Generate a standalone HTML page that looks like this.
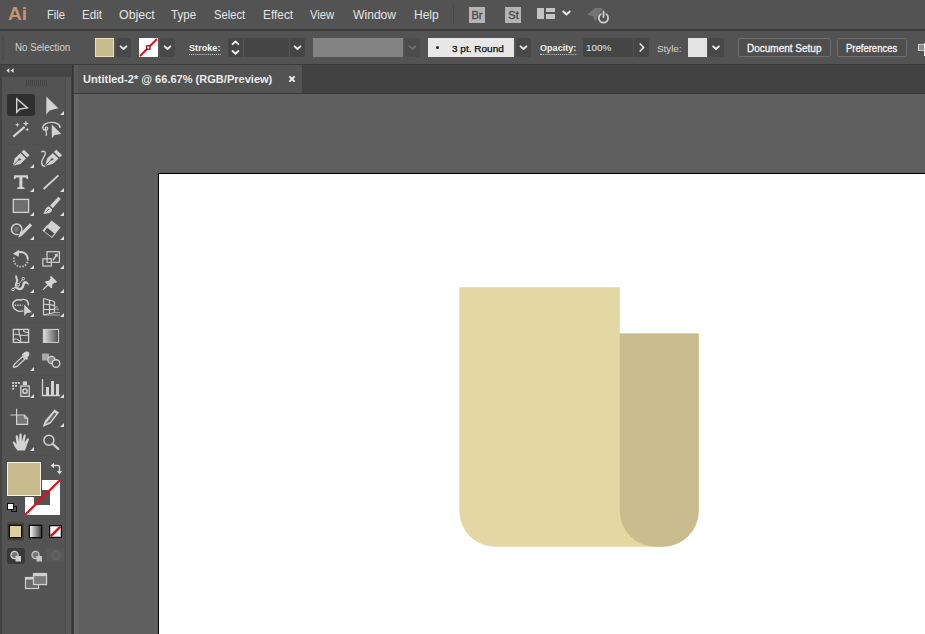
<!DOCTYPE html><html><head><meta charset="utf-8"><title>Adobe Illustrator</title><style>
*{box-sizing:border-box;margin:0;padding:0}
html,body{width:925px;height:634px;overflow:hidden;background:#5f5f5f}
body{position:relative;font-family:"Liberation Sans",sans-serif;color:#dcdcdc;font-size:12px}
.a{position:absolute}
.t{position:absolute;white-space:nowrap;transform-origin:0 50%;line-height:14px}
#menubar{left:0;top:0;width:925px;height:29px;background:#535353}
#div1{left:0;top:29px;width:925px;height:2px;background:#3c3c3c}
#ctrl{left:0;top:31px;width:925px;height:33px;background:#535353}
#tabbar{left:74px;top:64px;width:851px;height:30px;background:#424242;border-top:1px solid #3a3a3a;border-bottom:1px solid #3a3a3a}
#tab{left:75px;top:65px;width:227px;height:28px;background:#535353}
#tools{left:0;top:64px;width:74px;height:570px;background:#535353}
#canvas{left:74px;top:94px;width:851px;height:540px;background:#5f5f5f;overflow:hidden}
.dd{position:absolute;background:#484848;border-radius:2px}
.fld{position:absolute;background:#454545;border-radius:2px}
.btn{position:absolute;border:1px solid #6e6e6e;border-radius:2px;background:#4e4e4e}
</style></head><body>
<div class="a" id="menubar"></div><div class="a" id="div1"></div><div class="a" id="ctrl"></div>
<span class="t" style="left:8px;top:4px;font-size:18px;color:#c9936c;font-weight:bold;transform:scaleX(1.06);line-height:20px;">Ai</span>
<span class="t" style="left:47.3px;top:8px;font-size:12.5px;color:#e4e4e4;font-weight:normal;transform:scaleX(0.9);">File</span>
<span class="t" style="left:82px;top:8px;font-size:12.5px;color:#e4e4e4;font-weight:normal;transform:scaleX(0.93);">Edit</span>
<span class="t" style="left:119px;top:8px;font-size:12.5px;color:#e4e4e4;font-weight:normal;transform:scaleX(0.99);">Object</span>
<span class="t" style="left:171px;top:8px;font-size:12.5px;color:#e4e4e4;font-weight:normal;transform:scaleX(0.93);">Type</span>
<span class="t" style="left:214px;top:8px;font-size:12.5px;color:#e4e4e4;font-weight:normal;transform:scaleX(0.895);">Select</span>
<span class="t" style="left:263px;top:8px;font-size:12.5px;color:#e4e4e4;font-weight:normal;transform:scaleX(0.95);">Effect</span>
<span class="t" style="left:310.3px;top:8px;font-size:12.5px;color:#e4e4e4;font-weight:normal;transform:scaleX(0.9);">View</span>
<span class="t" style="left:353px;top:8px;font-size:12.5px;color:#e4e4e4;font-weight:normal;transform:scaleX(0.97);">Window</span>
<span class="t" style="left:414.3px;top:8px;font-size:12.5px;color:#e4e4e4;font-weight:normal;transform:scaleX(0.96);">Help</span>
<div class="a" style="left:453px;top:5px;width:1px;height:19px;background:#474747"></div>
<div class="a" style="left:469px;top:7px;width:16px;height:16px;background:#b4b4b4"></div>
<span class="t" style="left:471.5px;top:8px;font-size:11px;color:#4a4a4a;font-weight:normal;transform:scaleX(1.0);-webkit-text-stroke:0.35px #4a4a4a;">Br</span>
<div class="a" style="left:505px;top:7px;width:16px;height:16px;background:#b4b4b4"></div>
<span class="t" style="left:508.3px;top:8px;font-size:11px;color:#4a4a4a;font-weight:normal;transform:scaleX(1.0);-webkit-text-stroke:0.35px #4a4a4a;">St</span>
<div class="a" style="left:537px;top:7.5px;width:7.3px;height:11.3px;background:#c4c4c4"></div>
<div class="a" style="left:546px;top:7.5px;width:8.5px;height:4.5px;background:#c4c4c4"></div>
<div class="a" style="left:546px;top:14px;width:8.5px;height:4.8px;background:#c4c4c4"></div>
<svg class="a" style="left:558px;top:6px" width="16" height="12"><path d="M5.3 5.5 L8.5 8.5 L11.7 5.5" fill="none" stroke="#ececec" stroke-width="1.9" stroke-linecap="round" stroke-linejoin="round"/></svg>
<svg class="a" style="left:585px;top:4px" width="28" height="22" viewBox="0 0 28 22">
<path d="M2 11 L10 4 L18 4 L14 10 L10 18 L8 12 Z" fill="#757575"/>
<circle cx="18.5" cy="14" r="4.6" fill="none" stroke="#d0d0d0" stroke-width="1.8"/>
<rect x="16.5" y="7" width="4" height="5" fill="#535353"/>
<path d="M18.5 7.5 V13" stroke="#d0d0d0" stroke-width="1.8" stroke-linecap="round"/>
</svg>
<div class="a" style="left:2px;top:35px;width:2px;height:25px;background:repeating-linear-gradient(#474747 0 1px,#535353 1px 2px)"></div>
<span class="t" style="left:15px;top:40.5px;font-size:10px;color:#d2d2d2;font-weight:normal;transform:scaleX(0.975);">No Selection</span>
<div class="a" style="left:95px;top:38px;width:19px;height:19px;background:#c8bc8e;border:1px solid #e6dfc0"></div>
<div class="dd" style="left:116px;top:38px;width:15px;height:19px"></div><svg class="a" style="left:116px;top:38px" width="15" height="19"><path d="M4.6 8.35 L7.5 11.049999999999999 L10.4 8.35" fill="none" stroke="#ececec" stroke-width="1.9" stroke-linecap="round" stroke-linejoin="round"/></svg>
<svg class="a" style="left:139px;top:38px" width="19" height="19" viewBox="0 0 19 19"><rect x="0" y="0" width="19" height="19" fill="#fff"/><path d="M1 18 L18 1" stroke="#e0101c" stroke-width="2"/><rect x="7.6" y="7.8" width="3.4" height="3.4" fill="#fff" stroke="#a00c18" stroke-width="1.3"/></svg>
<div class="dd" style="left:160px;top:38px;width:15px;height:19px"></div><svg class="a" style="left:160px;top:38px" width="15" height="19"><path d="M4.6 8.35 L7.5 11.049999999999999 L10.4 8.35" fill="none" stroke="#ececec" stroke-width="1.9" stroke-linecap="round" stroke-linejoin="round"/></svg>
<span class="t" style="left:189px;top:42px;font-size:9.5px;color:#f0f0f0;font-weight:bold;transform:scaleX(0.962);border-bottom:1px dotted #cfcfcf;line-height:12px;">Stroke:</span>
<div class="fld" style="left:228px;top:38px;width:77px;height:19px"></div>
<div class="a" style="left:243px;top:38px;width:1px;height:19px;background:#535353"></div><div class="a" style="left:289px;top:38px;width:1px;height:19px;background:#535353"></div>
<svg class="a" style="left:228px;top:38px" width="15" height="19"><path d="M4.6 6.15 L7.5 3.4499999999999997 L10.4 6.15" fill="none" stroke="#ececec" stroke-width="1.9" stroke-linecap="round" stroke-linejoin="round"/><path d="M4.6 13.05 L7.5 15.75 L10.4 13.05" fill="none" stroke="#ececec" stroke-width="1.9" stroke-linecap="round" stroke-linejoin="round"/></svg>
<svg class="a" style="left:290px;top:38px" width="15" height="19"><path d="M4.6 8.35 L7.5 11.049999999999999 L10.4 8.35" fill="none" stroke="#ececec" stroke-width="1.9" stroke-linecap="round" stroke-linejoin="round"/></svg>
<div class="a" style="left:313px;top:38px;width:90px;height:19px;background:#838383"></div>
<div class="dd" style="left:405px;top:38px;width:15px;height:19px;background:#4c4c4c"></div><svg class="a" style="left:405px;top:38px" width="15" height="19"><path d="M4.6 8.35 L7.5 11.049999999999999 L10.4 8.35" fill="none" stroke="#6e6e6e" stroke-width="1.9" stroke-linecap="round" stroke-linejoin="round"/></svg>
<div class="a" style="left:428px;top:38px;width:86px;height:19px;background:#e7e7e7"></div>
<div class="a" style="left:436px;top:46px;width:3px;height:3px;border-radius:50%;background:#222"></div>
<span class="t" style="left:452px;top:41.8px;font-size:9.5px;color:#0c0c0c;font-weight:normal;transform:scaleX(1.055);-webkit-text-stroke:0.25px #0c0c0c;">3 pt. Round</span>
<div class="dd" style="left:516px;top:38px;width:15px;height:19px"></div><svg class="a" style="left:516px;top:38px" width="15" height="19"><path d="M4.6 8.35 L7.5 11.049999999999999 L10.4 8.35" fill="none" stroke="#ececec" stroke-width="1.9" stroke-linecap="round" stroke-linejoin="round"/></svg>
<span class="t" style="left:540px;top:42px;font-size:9.5px;color:#f0f0f0;font-weight:bold;transform:scaleX(0.955);border-bottom:1px dotted #cfcfcf;line-height:12px;">Opacity:</span>
<div class="fld" style="left:583px;top:38px;width:66px;height:19px"></div><div class="a" style="left:633px;top:38px;width:1px;height:19px;background:#535353"></div>
<span class="t" style="left:586px;top:41.2px;font-size:9.3px;color:#e8e8e8;font-weight:normal;transform:scaleX(1.07);">100%</span>
<svg class="a" style="left:634px;top:38px" width="15" height="19"><path d="M6.2 6 L9.6 9.5 L6.2 13" fill="none" stroke="#ececec" stroke-width="1.7" stroke-linecap="round" stroke-linejoin="round"/></svg>
<span class="t" style="left:657px;top:42px;font-size:9.5px;color:#d4d4d4;font-weight:normal;transform:scaleX(1.03);">Style:</span>
<div class="a" style="left:688px;top:38px;width:19px;height:19px;background:#e4e4e4"></div>
<div class="dd" style="left:708px;top:38px;width:16px;height:19px"></div><svg class="a" style="left:708px;top:38px" width="16" height="19"><path d="M5.1 8.35 L8 11.049999999999999 L10.9 8.35" fill="none" stroke="#ececec" stroke-width="1.9" stroke-linecap="round" stroke-linejoin="round"/></svg>
<div class="btn" style="left:738px;top:38px;width:93px;height:19px"></div>
<span class="t" style="left:747px;top:42.3px;font-size:10px;color:#f4f4f4;font-weight:normal;transform:scaleX(1.0);-webkit-text-stroke:0.3px #f4f4f4;">Document Setup</span>
<div class="btn" style="left:836.5px;top:38px;width:70px;height:19px"></div>
<span class="t" style="left:845.6px;top:42.3px;font-size:10px;color:#f4f4f4;font-weight:normal;transform:scaleX(0.95);-webkit-text-stroke:0.3px #f4f4f4;">Preferences</span>
<div class="a" style="left:917.5px;top:44px;width:7px;height:6.5px;background:#8c8c8c;border-left:1.5px solid #dcdcdc;border-top:1px solid #c4c4c4;border-bottom:1px solid #c4c4c4"></div><div class="a" style="left:923.8px;top:43px;width:1.2px;height:12.5px;background:#ececec"></div>
<div class="a" id="tabbar"></div><div class="a" id="tab"></div>
<span class="t" style="left:83px;top:72.4px;font-size:11.5px;color:#ececec;font-weight:bold;transform:scaleX(0.96);">Untitled-2* @ 66.67% (RGB/Preview)</span>
<svg class="a" style="left:288px;top:75px" width="8" height="8"><path d="M1.4 1.4 L6.6 6.6 M6.6 1.4 L1.4 6.6" stroke="#f0f0f0" stroke-width="1.9"/></svg>
<div class="a" id="tools"></div>
<div class="a" style="left:0;top:64px;width:2px;height:570px;background:#444"></div>
<div class="a" style="left:66px;top:64px;width:6px;height:570px;background:#585858"></div><div class="a" style="left:65px;top:77px;width:1px;height:557px;background:#4a4a4a"></div>
<div class="a" style="left:70.7px;top:64px;width:3.3px;height:570px;background:linear-gradient(90deg,#474747,#343434 55%,#444)"></div>
<div class="a" style="left:2px;top:64px;width:70px;height:13px;background:#464646"></div>
<div class="a" style="left:0px;top:64px;width:74px;height:1px;background:#3c3c3c"></div>
<svg class="a" style="left:5px;top:66px" width="12" height="9"><path d="M4.3 2.2 L1.3 4.6 L4.3 7 Z M8.6 2.2 L5.6 4.6 L8.6 7 Z" fill="#dcdcdc"/></svg>
<div class="a" style="left:26px;top:80px;width:21px;height:6px;background:repeating-linear-gradient(90deg,#434343 0 1px,#535353 1px 2px)"></div>
<div class="a" style="left:7px;top:94px;width:28px;height:22px;background:#2f2f2f;border-radius:3px"></div>
<div class="a" style="left:8px;top:144px;width:56px;height:1px;background:#505050"></div>
<div class="a" style="left:8px;top:244.5px;width:56px;height:1px;background:#505050"></div>
<div class="a" style="left:8px;top:321.5px;width:56px;height:1px;background:#505050"></div>
<div class="a" style="left:8px;top:374.5px;width:56px;height:1px;background:#505050"></div>
<div class="a" style="left:8px;top:402.5px;width:56px;height:1px;background:#505050"></div>
<div class="a" style="left:8px;top:455px;width:56px;height:1px;background:#505050"></div>
<svg class="a" style="left:9.0px;top:93.0px" width="24" height="24" viewBox="0 0 24 24"><path d="M7.7 5.8 L7.7 19.3 L11 16 L18.4 14.9 Z" fill="none" stroke="#d2d2d2" stroke-width="1.4" stroke-linejoin="miter"/></svg>
<svg class="a" style="left:39.0px;top:93.0px" width="24" height="24" viewBox="0 0 24 24"><path d="M7.3 3.5 L7.3 21.6 L10.6 17.5 L19.3 15.2 Z" fill="#d2d2d2"/></svg>
<svg class="a" style="left:60.3px;top:111px" width="4" height="4"><path d="M4 0 V4 H0 Z" fill="#dedede"/></svg>
<svg class="a" style="left:9.0px;top:118.0px" width="24" height="24" viewBox="0 0 24 24"><path d="M4.3 18.6 L15.6 8.9" stroke="#d2d2d2" stroke-width="2.1" stroke-linecap="butt"/><path d="M16.9 2.6 l.9 2.1 2.1 .9 -2.1 .9 -.9 2.1 -.9 -2.1 -2.1 -.9 2.1 -.9z" fill="#d2d2d2"/><path d="M8.3 4.6 l.65 1.5 1.5 .65 -1.5 .65 -.65 1.5 -.65 -1.5 -1.5 -.65 1.5 -.65z" fill="#d2d2d2"/><path d="M18.2 9.8 l.55 1.3 1.3 .55 -1.3 .55 -.55 1.3 -.55 -1.3 -1.3 -.55 1.3 -.55z" fill="#d2d2d2"/></svg>
<svg class="a" style="left:39.0px;top:118.0px" width="24" height="24" viewBox="0 0 24 24"><path d="M3.8 10.2 C3.2 2.5 21.8 2.5 21 10" fill="none" stroke="#d2d2d2" stroke-width="1.4"/><path d="M3.8 10.2 C4.3 13 8.5 12.8 8.7 10.6 C8.9 8.6 6 8.6 6.3 10.8 C6.7 13.5 8.6 15 7 18" fill="none" stroke="#d2d2d2" stroke-width="1.3"/><path d="M12.8 6.5 L12.8 20.3 L15.6 17 L22.3 16 Z" fill="#d2d2d2"/></svg>
<svg class="a" style="left:9.0px;top:146.0px" width="24" height="24" viewBox="0 0 24 24"><g transform="translate(0.48,1.25) scale(0.95,0.9)"><path d="M3.5 20.5 L5.5 12.5 L11.5 6.5 L17.5 12.5 L11.5 18.5 Z" fill="#d2d2d2"/><path d="M12.6 5.4 L15.2 2.8 L21.2 8.8 L18.6 11.4 Z" fill="#d2d2d2"/><path d="M3.5 20.5 L10 14" stroke="#535353" stroke-width="1"/><circle cx="10.6" cy="13.4" r="1.3" fill="#535353"/></g></svg>
<svg class="a" style="left:39.0px;top:146.0px" width="24" height="24" viewBox="0 0 24 24"><g transform="translate(2.9,1.25) scale(0.95,0.9)"><path d="M3.5 20.5 L5.5 12.5 L11.5 6.5 L17.5 12.5 L11.5 18.5 Z" fill="#d2d2d2"/><path d="M12.6 5.4 L15.2 2.8 L21.2 8.8 L18.6 11.4 Z" fill="#d2d2d2"/><path d="M3.5 20.5 L10 14" stroke="#535353" stroke-width="1"/><circle cx="10.6" cy="13.4" r="1.3" fill="#535353"/></g><path d="M2.3 6.3 C4 4.3 6.9 5.4 6.2 8 C5.5 11 2.2 14 2.6 17 C3 19 4.3 20.4 6.2 20.2" fill="none" stroke="#d2d2d2" stroke-width="1.3"/></svg>
<svg class="a" style="left:30.3px;top:164px" width="4" height="4"><path d="M4 0 V4 H0 Z" fill="#dedede"/></svg>
<svg class="a" style="left:9.0px;top:170.0px" width="24" height="24" viewBox="0 0 24 24"><path d="M5 5.2 H19 V9 H17.7 L17.1 7.6 H13.4 V17 L15.6 17.5 V18.9 H8.2 V17.5 L10.4 17 V7.6 H6.9 L6.3 9 H5 Z" fill="#d2d2d2"/></svg>
<svg class="a" style="left:39.0px;top:170.0px" width="24" height="24" viewBox="0 0 24 24"><path d="M4.6 19 L19.4 5.4" stroke="#d2d2d2" stroke-width="1.9"/></svg>
<svg class="a" style="left:30.3px;top:188px" width="4" height="4"><path d="M4 0 V4 H0 Z" fill="#dedede"/></svg>
<svg class="a" style="left:60.3px;top:188px" width="4" height="4"><path d="M4 0 V4 H0 Z" fill="#dedede"/></svg>
<svg class="a" style="left:9.0px;top:194.0px" width="24" height="24" viewBox="0 0 24 24"><rect x="4.3" y="5.4" width="15.3" height="13" fill="#6f6f6f" stroke="#d2d2d2" stroke-width="1.3"/></svg>
<svg class="a" style="left:39.0px;top:194.0px" width="24" height="24" viewBox="0 0 24 24"><path d="M19.4 2.8 L21.7 5 L13.8 14.3 L11 11.5 Z" fill="#d2d2d2"/><path d="M10 12.3 L13 15.3 C13.2 19 9 20 4 19.8 C6.2 18.3 5.3 13.8 10 12.3 Z" fill="#d2d2d2"/><path d="M7.2 17.8 L10 15" stroke="#535353" stroke-width="0.9"/><path d="M10.4 11.8 L13.6 15" stroke="#535353" stroke-width="0.8"/></svg>
<svg class="a" style="left:30.3px;top:212px" width="4" height="4"><path d="M4 0 V4 H0 Z" fill="#dedede"/></svg>
<svg class="a" style="left:60.3px;top:212px" width="4" height="4"><path d="M4 0 V4 H0 Z" fill="#dedede"/></svg>
<svg class="a" style="left:9.0px;top:218.0px" width="24" height="24" viewBox="0 0 24 24"><circle cx="7.7" cy="11.3" r="5.2" fill="none" stroke="#d2d2d2" stroke-width="1.5"/><circle cx="7.6" cy="11.2" r="2.7" fill="#747474"/><path d="M8.2 13.6 L13.6 19" stroke="#535353" stroke-width="1.6"/><path d="M21 5.2 L23.2 7.4 L12.7 18.1 L9 19.8 L10.5 15.9 Z" fill="#d2d2d2"/></svg>
<svg class="a" style="left:39.0px;top:218.0px" width="24" height="24" viewBox="0 0 24 24"><path d="M12.5 2.5 L21.5 9.5 L13 20 L4 13 Z" fill="#d2d2d2"/><path d="M5.5 13.2 L8.3 9.8 L15.3 15.4 L12.6 18.8 Z" fill="#4a4a4a"/><path d="M4 13 L8.8 7.2" stroke="#d2d2d2" stroke-width="1.2"/></svg>
<svg class="a" style="left:30.3px;top:236px" width="4" height="4"><path d="M4 0 V4 H0 Z" fill="#dedede"/></svg>
<svg class="a" style="left:60.3px;top:236px" width="4" height="4"><path d="M4 0 V4 H0 Z" fill="#dedede"/></svg>
<svg class="a" style="left:9.0px;top:247.0px" width="24" height="24" viewBox="0 0 24 24"><path d="M8 6.2 A7 7 0 0 1 18.8 12" fill="none" stroke="#d2d2d2" stroke-width="1.9"/><path d="M18.8 12 A7 7 0 1 1 5.2 10.5" fill="none" stroke="#bdbdbd" stroke-width="1.7" stroke-dasharray="1.6 1.3"/><path d="M3.8 6.8 L10.2 2.8 L9.7 9.8 Z" fill="#d2d2d2"/></svg>
<svg class="a" style="left:39.0px;top:247.0px" width="24" height="24" viewBox="0 0 24 24"><rect x="8" y="4.7" width="12.4" height="10.6" fill="none" stroke="#d2d2d2" stroke-width="1.2"/><rect x="3.9" y="11.8" width="8.4" height="7.2" fill="none" stroke="#d2d2d2" stroke-width="1.2"/><path d="M14 13.4 L17.6 8" stroke="#d2d2d2" stroke-width="1.4"/><path d="M15.2 7.6 L18.9 6.4 L18.6 10.2 Z" fill="#d2d2d2"/></svg>
<svg class="a" style="left:30.3px;top:265px" width="4" height="4"><path d="M4 0 V4 H0 Z" fill="#dedede"/></svg>
<svg class="a" style="left:60.3px;top:265px" width="4" height="4"><path d="M4 0 V4 H0 Z" fill="#dedede"/></svg>
<svg class="a" style="left:9.0px;top:271.0px" width="24" height="24" viewBox="0 0 24 24"><path d="M4 17.5 C5 15 8 15.5 9.5 16.5 C12 18 13 15 13.5 12.5 C14 10 17 8.5 19.5 12.5 L20.5 15.5 C18 11.5 16 12 15.5 14.5 C15 18.5 11 20.5 8.5 18.5 C7 17.5 5.5 17 4 17.5 Z" fill="#d2d2d2"/><path d="M7.5 4.5 C6 7 9 8 8 10.5 C7 13 6 14 7.5 15.5" fill="none" stroke="#d2d2d2" stroke-width="2"/><circle cx="9" cy="13.8" r="1.5" fill="#535353" stroke="#d2d2d2" stroke-width="1"/><circle cx="14.2" cy="7.7" r="1.3" fill="#535353" stroke="#d2d2d2" stroke-width="1"/><path d="M10 12.8 L13.3 8.6" stroke="#d2d2d2" stroke-width="0.9"/><circle cx="4" cy="18.5" r="1.3" fill="#535353" stroke="#d2d2d2" stroke-width="1"/></svg>
<svg class="a" style="left:39.0px;top:271.0px" width="24" height="24" viewBox="0 0 24 24"><g transform="translate(1.2,2.8) scale(0.8)"><path d="M13.5 2.5 L21 10 L19.5 11.5 L18 10.8 L15 13.8 L15 17 L13.5 18 L6 10.5 L7 9 L10.2 9 L13.2 6 L12.3 4 Z" fill="#d2d2d2"/><path d="M9.5 14 L4 19.5" stroke="#d2d2d2" stroke-width="1.6" stroke-linecap="round"/></g></svg>
<svg class="a" style="left:30.3px;top:289px" width="4" height="4"><path d="M4 0 V4 H0 Z" fill="#dedede"/></svg>
<svg class="a" style="left:60.3px;top:289px" width="4" height="4"><path d="M4 0 V4 H0 Z" fill="#dedede"/></svg>
<svg class="a" style="left:9.0px;top:295.0px" width="24" height="24" viewBox="0 0 24 24"><path d="M14.5 15.6 C10 17.5 5 15.5 3.9 11 C2.8 6.5 7.5 3.8 11.5 5 C15.5 3.2 20 5.5 19.3 10.5" fill="none" stroke="#d2d2d2" stroke-width="1.4"/><path d="M5.8 10.2 H13.5" stroke="#d2d2d2" stroke-width="1.6" stroke-dasharray="1.3 1.1"/><path d="M15.2 9.6 L15.2 21 L17.9 18 L23 17.3 Z" fill="#d2d2d2"/></svg>
<svg class="a" style="left:39.0px;top:295.0px" width="24" height="24" viewBox="0 0 24 24"><path d="M4.5 3.5 V20 M4.5 3.5 L15.5 6.5 M4.5 9 L15.5 10.3 M4.5 14.5 L15.5 14.2 M4.5 20 L15.5 17.5 M10.5 5 V18.7 M15.5 6.5 V17.5" fill="none" stroke="#d2d2d2" stroke-width="1.2"/><path d="M4.5 20 H21 M15.5 17.5 H21 M15.5 14.2 H20 M15.5 12 H19" stroke="#d2d2d2" stroke-width="0.9" opacity=".8"/></svg>
<svg class="a" style="left:30.3px;top:313px" width="4" height="4"><path d="M4 0 V4 H0 Z" fill="#dedede"/></svg>
<svg class="a" style="left:60.3px;top:313px" width="4" height="4"><path d="M4 0 V4 H0 Z" fill="#dedede"/></svg>
<svg class="a" style="left:9.0px;top:324.0px" width="24" height="24" viewBox="0 0 24 24"><rect x="4.3" y="5.4" width="15.3" height="13" fill="none" stroke="#d2d2d2" stroke-width="1.3"/><path d="M4 11 C8 8 12 14 20 10.5 M10.5 5.2 C8 9 14 14 11 18.8 M4 16 C8 13 10 17 13 18.8 M15 5.2 C13 8 18 9 20 8" fill="none" stroke="#d2d2d2" stroke-width="1.1"/></svg>
<svg class="a" style="left:39.0px;top:324.0px" width="24" height="24" viewBox="0 0 24 24"><defs><linearGradient id="gtool" x1="0" x2="1"><stop offset="0" stop-color="#e2e2e2"/><stop offset="1" stop-color="#4a4a4a"/></linearGradient></defs><rect x="4.3" y="5.4" width="15.3" height="13" fill="url(#gtool)" stroke="#d2d2d2" stroke-width="1"/></svg>
<svg class="a" style="left:9.0px;top:349.0px" width="24" height="24" viewBox="0 0 24 24"><g transform="translate(0.9,-0.4) scale(0.94)"><path d="M15 4.5 C16.5 2.5 19.5 2.8 20.5 4.5 C21.5 6.5 20 8.5 18.5 9.5 L19.5 10.5 L18 12 L12.5 6.5 L14 5 Z" fill="#d2d2d2"/><path d="M13.5 8.5 L16 11 L7.5 19 L4.5 20 L3.5 19 L5 16.5 Z" fill="none" stroke="#d2d2d2" stroke-width="1.4"/></g></svg>
<svg class="a" style="left:39.0px;top:349.0px" width="24" height="24" viewBox="0 0 24 24"><rect x="3" y="4.5" width="7" height="7" fill="#a8a8a8"/><circle cx="12.5" cy="11" r="3.6" fill="#888" stroke="#d2d2d2" stroke-width="1.2"/><circle cx="17" cy="14.5" r="3.8" fill="#535353" stroke="#d2d2d2" stroke-width="1.4"/></svg>
<svg class="a" style="left:30.3px;top:367px" width="4" height="4"><path d="M4 0 V4 H0 Z" fill="#dedede"/></svg>
<svg class="a" style="left:9.0px;top:376.0px" width="24" height="24" viewBox="0 0 24 24"><rect x="11.8" y="10" width="8.4" height="10.4" fill="none" stroke="#d2d2d2" stroke-width="1.3"/><rect x="13.8" y="5.4" width="4.2" height="3.6" fill="#d2d2d2"/><circle cx="16" cy="15.2" r="2.1" fill="none" stroke="#d2d2d2" stroke-width="1.5"/><g fill="#d2d2d2"><rect x="3.2" y="6" width="1.9" height="1.9"/><rect x="6.1" y="6" width="1.9" height="1.9"/><rect x="9" y="6" width="1.9" height="1.9"/><rect x="3.2" y="8.9" width="1.9" height="1.9"/><rect x="6.1" y="8.9" width="1.9" height="1.9"/><rect x="3.2" y="11.8" width="1.9" height="1.9"/></g></svg>
<svg class="a" style="left:39.0px;top:376.0px" width="24" height="24" viewBox="0 0 24 24"><path d="M3.5 3 V19.5 H21" fill="none" stroke="#d2d2d2" stroke-width="1.3"/><rect x="7" y="11" width="3" height="8" fill="#d2d2d2"/><rect x="12" y="5" width="3" height="14" fill="#d2d2d2"/><rect x="17" y="8" width="3" height="11" fill="#d2d2d2"/></svg>
<svg class="a" style="left:30.3px;top:394px" width="4" height="4"><path d="M4 0 V4 H0 Z" fill="#dedede"/></svg>
<svg class="a" style="left:60.3px;top:394px" width="4" height="4"><path d="M4 0 V4 H0 Z" fill="#dedede"/></svg>
<svg class="a" style="left:9.0px;top:405.0px" width="24" height="24" viewBox="0 0 24 24"><path d="M7.6 3.8 V10 M1.5 10 H8" stroke="#d2d2d2" stroke-width="1.2"/><path d="M7.6 10 H15.4 L18.6 13.2 V19.4 H7.6 Z" fill="#777" stroke="#d2d2d2" stroke-width="1.2"/><path d="M15.4 10 V13.2 H18.6" fill="none" stroke="#d2d2d2" stroke-width="1"/></svg>
<svg class="a" style="left:39.0px;top:405.0px" width="24" height="24" viewBox="0 0 24 24"><g transform="translate(-0.9,1.4)"><path d="M16.5 3 L21 6 L12.5 17 L4.5 20.5 L7 14 Z" fill="#d2d2d2"/><path d="M16.2 6 L18.3 7.4 L11.8 15.6 L7.6 17.6 Z" fill="#6a6a6a"/></g></svg>
<svg class="a" style="left:60.3px;top:423px" width="4" height="4"><path d="M4 0 V4 H0 Z" fill="#dedede"/></svg>
<svg class="a" style="left:9.0px;top:429.0px" width="24" height="24" viewBox="0 0 24 24"><path transform="translate(0.4,1)" d="M8 20.5 C6 18 4.5 15.5 3.5 13 C3 11.7 4.7 11 5.5 12.2 L7.2 14.5 L6.3 6.5 C6.2 5 8.2 4.8 8.5 6.3 L9.6 11.5 L10 4.5 C10.1 3 12.2 3 12.3 4.5 L12.5 11.5 L14.3 5.5 C14.8 4 16.7 4.6 16.4 6 L15 12.5 L17.8 8.8 C18.7 7.7 20.2 8.7 19.5 10 C18 13 17.5 16 15.5 20.5 Z" fill="#d2d2d2"/></svg>
<svg class="a" style="left:39.0px;top:429.0px" width="24" height="24" viewBox="0 0 24 24"><circle cx="9.9" cy="11.2" r="5" fill="none" stroke="#d2d2d2" stroke-width="1.5"/><path d="M13.8 15 L19.3 19.9" stroke="#d2d2d2" stroke-width="2.2" stroke-linecap="round"/></svg>
<svg class="a" style="left:30.3px;top:447px" width="4" height="4"><path d="M4 0 V4 H0 Z" fill="#dedede"/></svg>
<div class="a" style="left:25px;top:480px;width:34.6px;height:34.5px;background:#fff"></div>
<div class="a" style="left:34px;top:490px;width:16px;height:15px;background:#535353"></div>
<svg class="a" style="left:24px;top:479px" width="37" height="37"><path d="M1 36 L36 1" stroke="#e0101c" stroke-width="2.2"/></svg>
<div class="a" style="left:7px;top:462px;width:34px;height:34px;background:#c8bc8e;border:1px solid #f7f4e4;box-shadow:0 0 0 1px #4a4a4a"></div>
<svg class="a" style="left:49px;top:462px" width="14" height="14"><path d="M4.5 3.5 H9 Q10.5 3.5 10.5 5 V9" fill="none" stroke="#d8d8d8" stroke-width="1.4"/><path d="M1.5 3.5 L5 0.8 V6.2 Z M10.5 12.5 L7.8 9 H13.2 Z" fill="#d8d8d8"/></svg>
<div class="a" style="left:10.6px;top:506.3px;width:6px;height:6px;border:1px solid #111;background:#535353"></div>
<div class="a" style="left:7px;top:503px;width:7px;height:7px;border:1px solid #111;background:#fff"></div>
<div class="a" style="left:7px;top:522px;width:17px;height:18.5px;background:#454545;border-radius:2px"></div>
<div class="a" style="left:9px;top:525px;width:13px;height:13px;background:#dccf9c;border:1px solid #0a0a0a;box-shadow:0 0 0 .4px #111"></div>
<div class="a" style="left:29px;top:525px;width:13px;height:13px;background:linear-gradient(90deg,#f4f4f4,#444);border:1px solid #0a0a0a;box-shadow:0 0 0 .4px #111"></div>
<svg class="a" style="left:49px;top:525px" width="13" height="13"><rect x=".6" y=".6" width="11.8" height="11.8" fill="#fff" stroke="#0a0a0a" stroke-width="1.3"/><path d="M1.6 11.4 L11.4 1.6" stroke="#e0101c" stroke-width="2.6"/></svg>
<div class="a" style="left:7.4px;top:548px;width:17.4px;height:15.6px;background:#383838;border-radius:2px"></div>
<svg class="a" style="left:8px;top:549px" width="15" height="14"><circle cx="6.5" cy="6" r="3.6" fill="#777" stroke="#d0d0d0" stroke-width="1.3"/><rect x="7.5" y="7" width="5.5" height="5.5" fill="#d0d0d0"/></svg>
<svg class="a" style="left:29px;top:549px" width="15" height="14"><circle cx="6.5" cy="6" r="3.6" fill="#777" stroke="#c4c4c4" stroke-width="1.3"/><rect x="7.5" y="7" width="5.5" height="5.5" fill="#c4c4c4"/></svg>
<div class="a" style="left:47px;top:548.5px;width:16.5px;height:13px;background:#595959"></div><svg class="a" style="left:49px;top:549px" width="15" height="14"><circle cx="7" cy="6.5" r="3.8" fill="#5c5c5c" stroke="#686868" stroke-width="1.3"/></svg>
<svg class="a" style="left:24px;top:572px" width="25" height="18"><rect x="9.5" y="1.5" width="13" height="11" fill="#7c7c7c" stroke="#d0d0d0" stroke-width="1.2"/><rect x="9.5" y="1.5" width="13" height="2" fill="#d0d0d0"/><rect x="1.5" y="5.5" width="13" height="11" fill="#6a6a6a" stroke="#d0d0d0" stroke-width="1.2"/><rect x="1.5" y="5.5" width="13" height="2" fill="#d0d0d0"/><rect x="9.5" y="3.5" width="13" height="9" fill="#7c7c7c" stroke="#d0d0d0" stroke-width="1.2"/></svg>
<div class="a" id="canvas"><div class="a" style="left:84px;top:79px;width:800px;height:500px;background:#fff;border-left:1px solid #000;border-top:1px solid #000"></div><svg class="a" style="left:0;top:0" width="851" height="540"><g transform="translate(-74,-94)"><path d="M459.3 287.3 H619.8 V333.4 H698.7 V510.7 A36 36 0 0 1 662.7 546.7 H495.3 A36 36 0 0 1 459.3 510.7 Z" fill="#e3d7a3"/><path d="M619.8 333.4 H698.7 V510.7 A36 36 0 0 1 662.7 546.7 H655.8 A36 36 0 0 1 619.8 510.7 Z" fill="#c9bd8e"/></g></svg></div>
<div class="a" style="left:74px;top:65px;width:4px;height:28px;background:#595959"></div><div class="a" style="left:74px;top:94px;width:4px;height:540px;background:#676767"></div>
</body></html>
